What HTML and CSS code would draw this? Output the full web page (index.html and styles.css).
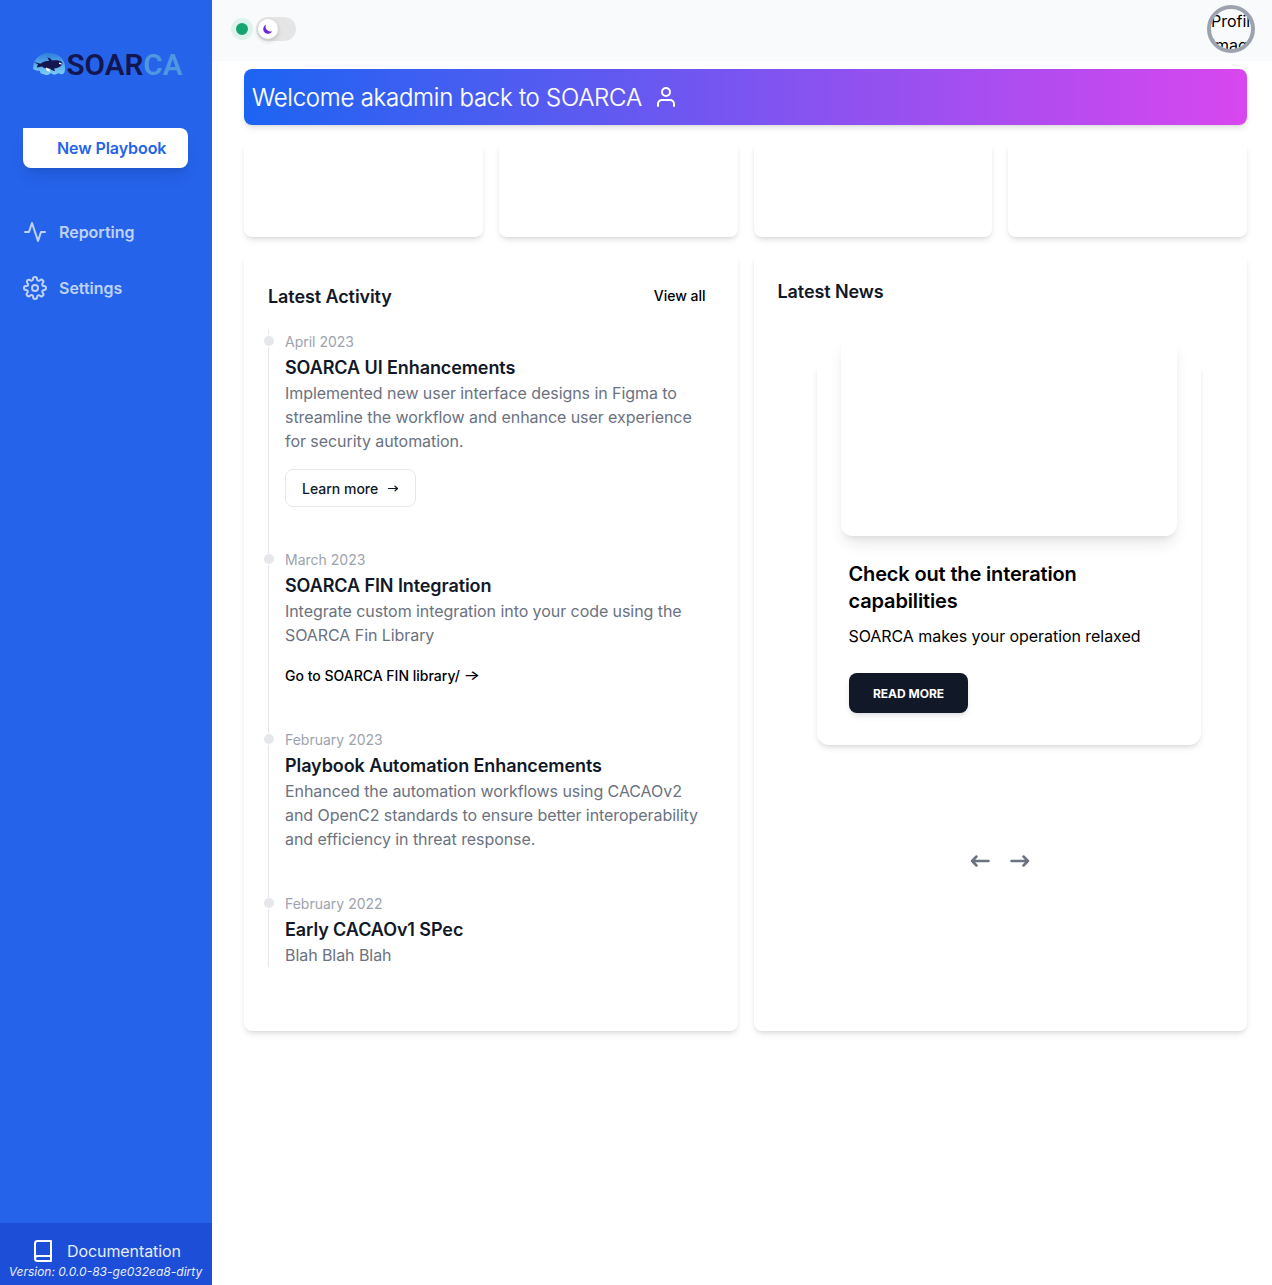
FILE: index.html
```html
<!DOCTYPE html>
<html lang="en">
<head>
<meta charset="utf-8">
<title>SOARCA</title>
<link rel="stylesheet" href="styles.css">
</head>
<body>
<div class="layout">
  <aside class="sidebar">
    <svg class="logo" width="156" height="32" viewBox="0 0 156 32" role="img" aria-label="SOARCA">
      <defs><linearGradient id="sea" x1="0" y1="0" x2="0" y2="1"><stop offset="0" stop-color="#2f7fdf"/><stop offset="1" stop-color="#7fd0f8"/></linearGradient></defs>
      <path d="M1 17C1 7 8 1 17 1s16 6 16 14c0 3 0 4-1 6-2 2-4 1-6 0-2 2-5 2-7 0-2 2-5 3-8 1-2 0-3-1-3-3-3 0-5-1-7-2z" fill="url(#sea)"/>
      <path d="M2 10c2 0 4 2 7 1.500 2-2 5-2.500 8-2.500-.5-2-1-3-2-3.500 3 0 4 1.500 5 3 5-1 10 0 10.500 3-.5 2-3 4.500-8.500 5l1 2.500c-2 0-4-1-5-2.500-3 0-6 0-8-2-2 0-3 1-5 1 0-2 1-2 1-3z" fill="#131650"/>
      <path d="M27 10.500c2 0 3 1 3 2l-3-.5zM14 15.500c2 1 4 1 4 4-3 0-4-1-4-4z" fill="#fff"/>
      <text x="34.500" y="23" textLength="116" lengthAdjust="spacingAndGlyphs" class="logo-text"><tspan class="logo-dark">SOAR</tspan><tspan class="logo-light">CA</tspan></text>
    </svg>
    <a class="new-playbook">New Playbook</a>
    <nav class="nav">
      <a class="nav-item">
        <svg width="24" height="24" viewBox="0 0 24 24" class="icon"><path d="M22 12h-4l-3 9L9 3l-3 9H2"/></svg>
        Reporting
      </a>
      <a class="nav-item">
        <svg width="24" height="24" viewBox="0 0 24 24" class="icon"><circle cx="12" cy="12" r="3"/><path d="M19.4 15a1.65 1.65 0 0 0 .33 1.82l.06.06a2 2 0 0 1-2.83 2.83l-.06-.06a1.65 1.65 0 0 0-2.8 1.17V21a2 2 0 0 1-4 0v-.09a1.65 1.65 0 0 0-2.9-1.26l-.06.06a2 2 0 0 1-2.83-2.83l.06-.06A1.65 1.65 0 0 0 3.09 14H3a2 2 0 0 1 0-4h.09A1.65 1.65 0 0 0 4.6 7.18l-.06-.06a2 2 0 0 1 2.83-2.83l.06.06A1.65 1.65 0 0 0 10 3.09V3a2 2 0 0 1 4 0v.09a1.65 1.65 0 0 0 2.82 1.26l.06-.06a2 2 0 0 1 2.83 2.83l-.06.06A1.65 1.65 0 0 0 20.91 10H21a2 2 0 0 1 0 4h-.09a1.65 1.65 0 0 0-1.51 1z"/></svg>
        Settings
      </a>
    </nav>
    <footer class="side-footer">
      <a class="docs">
        <svg width="24" height="24" viewBox="0 0 24 24" class="icon"><path d="M4 19V4.500A2.500 2.500 0 0 1 6.500 2H20v20H6.500A2.500 2.500 0 0 1 4 19.500A2.500 2.500 0 0 1 6.500 17H20"/></svg>
        Documentation
      </a>
      <p class="version">Version: 0.0.0-83-ge032ea8-dirty</p>
    </footer>
  </aside>
  <div class="page">
    <header class="topbar">
      <div class="controls">
        <span class="status"></span>
        <span class="switch"><span class="knob"><svg width="12" height="12" viewBox="0 0 20 20"><path fill="#6d28d9" d="M17.293 13.293A8 8 0 0 1 6.707 2.707a8.001 8.001 0 1 0 10.586 10.586z"/></svg></span></span>
      </div>
      <div class="avatar">Profile image</div>
    </header>
    <main class="content">
      <section class="banner">
        <h1>Welcome akadmin back to SOARCA</h1>
        <svg width="24" height="24" viewBox="0 0 24 24" class="icon"><path d="M20 21v-2a4 4 0 0 0-4-4H8a4 4 0 0 0-4 4v2"/><circle cx="12" cy="7" r="4"/></svg>
      </section>
      <section class="stats">
        <div class="card"></div><div class="card"></div><div class="card"></div><div class="card"></div>
      </section>
      <section class="panels">
        <article class="card panel">
          <div class="panel-head"><h2>Latest Activity</h2><a class="view-all">View all</a></div>
          <ol class="timeline">
            <li><time>April 2023</time><h3>SOARCA UI Enhancements</h3>
              <p>Implemented new user interface designs in Figma to streamline the workflow and enhance user experience for security automation.</p>
              <a class="learn-more">Learn more <svg width="12" height="12" viewBox="0 0 12 12"><path class="stroke" d="M1.500 5.500h9m0 0L8 3.200m2.500 2.300L8 7.800"/></svg></a></li>
            <li><time>March 2023</time><h3>SOARCA FIN Integration</h3>
              <p>Integrate custom integration into your code using the SOARCA Fin Library</p>
              <div class="link-line"><a>Go to SOARCA FIN library/ <span class="arrow">→</span></a></div></li>
            <li><time>February 2023</time><h3>Playbook Automation Enhancements</h3>
              <p class="last">Enhanced the automation workflows using CACAOv2 and OpenC2 standards to ensure better interoperability and efficiency in threat response.</p></li>
            <li><time>February 2022</time><h3>Early CACAOv1 SPec</h3><p class="last">Blah Blah Blah</p></li>
          </ol>
        </article>
        <article class="card panel">
          <h2>Latest News</h2>
          <div class="news-card">
            <div class="news-image"></div>
            <div class="news-body">
              <h5>Check out the interation capabilities</h5>
              <p>SOARCA makes your operation relaxed</p>
              <button class="read-more">READ MORE</button>
            </div>
          </div>
          <div class="pager">
            <svg width="24" height="24" viewBox="0 0 24 24" class="icon"><path d="M20.500 12H4m4.500-4.500L4 12l4.500 4.500"/></svg>
            <svg width="24" height="24" viewBox="0 0 24 24" class="icon"><path d="M3.500 12H20m-4.500-4.500L20 12l-4.500 4.500"/></svg>
          </div>
        </article>
      </section>
    </main>
  </div>
</div>
</body>
</html>
```
FILE: styles.css
```css
*{box-sizing:border-box;margin:0;padding:0}
body{font:16px/24px Inter,"Liberation Sans",sans-serif;color:#000;background:#fff}
svg{display:block;flex:none}
.icon{fill:none;stroke:currentColor;stroke-width:2;stroke-linecap:round;stroke-linejoin:round}
.layout{display:flex;height:1285px}
.sidebar{width:212px;flex:none;background:#2563eb;display:flex;flex-direction:column}
.logo{margin:52px 0 0 32px;overflow:visible}
.logo-text{font:600 29px Roboto,sans-serif}
.logo-dark{fill:#131650}
.logo-light{fill:#4f97df}
.new-playbook{margin:44px 24px 0 23px;height:40px;padding:8px 0 0 34px;background:#fff;border-radius:0 8px 8px 8px;color:#2563eb;font-weight:600;letter-spacing:-.08px;box-shadow:0 10px 15px -3px rgba(0,0,0,.1),0 4px 6px -4px rgba(0,0,0,.1)}
.nav{margin-top:52px;padding-left:23px;display:grid;gap:32px}
.nav-item{display:flex;gap:12px;font-weight:600;letter-spacing:-.03px;color:#bfd3fa}
.side-footer{margin-top:auto;height:62px;background:#1d4ed8;padding-top:16px;color:#e5edff}
.docs{display:flex;gap:12px;padding-left:31px;letter-spacing:-.08px}
.docs svg{color:#fff}
.version{font-size:12px;line-height:18px;font-style:italic;text-align:center;padding-right:1px}
.page{flex:1;min-width:0}
.topbar{height:61px;background:#f9fafb;display:flex;justify-content:space-between;padding:5px 17px 0 19px}
.controls{display:flex;gap:3px;padding-top:12px}
.status{width:22px;height:22px;margin-top:1px;border-radius:50%;border:5px solid #def3ec;background:#16a571}
.switch{width:40px;height:24px;border-radius:12px;background:#e5e5e5;padding:2px}
.knob{width:20px;height:20px;border-radius:50%;background:#fff;display:flex;align-items:center;justify-content:center;box-shadow:0 2px 5px rgba(0,0,0,.18)}
.avatar{width:48px;height:48px;border:4px solid #9ca3af;border-radius:50%;overflow:hidden}
.content{padding:8px 25px 0 32px;display:grid;gap:16px}
.banner{height:56px;border-radius:8px;padding:0 8px;display:flex;align-items:center;gap:12px;color:#fff;background:linear-gradient(90deg,#1c64f2,#d946ef);box-shadow:0 4px 6px -1px rgba(0,0,0,.1),0 2px 4px -2px rgba(0,0,0,.1)}
.banner h1{width:390px;white-space:nowrap;font-size:24px;line-height:32px;font-weight:300;letter-spacing:-.26px;padding-top:2px;-webkit-text-stroke:.2px currentColor}
.stats{display:grid;grid-template-columns:repeat(4,1fr);gap:16px}
.stats .card{height:96px}
.card{background:#fff;border-radius:8px;box-shadow:0 4px 6px -1px rgba(0,0,0,.1),0 2px 4px -2px rgba(0,0,0,.1)}
.panels{display:grid;grid-template-columns:repeat(2,1fr);gap:16px}
.panel{height:778px;padding:24px}
.panel h2,.timeline h3{font-size:18px;line-height:26px;padding-top:2px;font-weight:600;letter-spacing:-.09px;color:#111827}
.panel .panel-head h2{padding-top:1px}
.panel-head{display:flex;align-items:center;justify-content:space-between;height:38px;margin-bottom:14px}
.view-all{font-size:14px;line-height:20px;font-weight:500;padding-right:8px}
.timeline{list-style:none;border-left:1px solid #e5e7eb}
.timeline li{position:relative;margin:0 0 40px 16px}
.timeline li:last-child{margin-bottom:0}
.timeline li::before{content:"";position:absolute;left:-21px;top:7px;width:10px;height:10px;border-radius:50%;background:#e5e7eb;box-shadow:0 0 0 1px #fff}
.timeline time{font-size:14px;line-height:14px;color:#9ca3af}
.timeline p{color:#6b7280;margin-bottom:16px;letter-spacing:-.065px}
.timeline p.last{margin-bottom:0}
.learn-more{display:flex;width:131px;height:38px;align-items:center;gap:9px;padding:1px 15px 0 16px;border:1px solid #e5e7eb;border-radius:8px;font-size:14px;font-weight:500;color:#111827}
.stroke{fill:none;stroke:currentColor;stroke-width:1.2;stroke-linecap:round;stroke-linejoin:round}
.link-line{height:24px}
.link-line a{font-size:14px;font-weight:500}
.arrow{display:inline-block;font-size:17.5px;font-weight:500;line-height:14px;transform:scaleY(.75)}
.news-card{width:384px;height:385px;margin:55px 0 0 39px;border-radius:12px;box-shadow:0 4px 6px -1px rgba(0,0,0,.1),0 2px 4px -2px rgba(0,0,0,.1);display:flex;flex-direction:column}
.news-image{height:200px;margin:-24px 24px 0;border-radius:12px;background:#fff;box-shadow:0 10px 15px -3px rgba(0,0,0,.1),0 4px 6px -4px rgba(0,0,0,.1)}
.news-body{padding:25px 32px 0}
.news-body h5{font-size:20px;line-height:27px;font-weight:600;letter-spacing:-.15px;margin-bottom:9px}
.news-body p{letter-spacing:-.06px}
.read-more{display:block;margin-top:25px;width:119px;height:40px;padding:2px 0 0 1px;border:0;border-radius:8px;background:#111827;color:#fff;font:700 12px/16px Inter,sans-serif;box-shadow:0 4px 6px -1px rgba(17,24,39,.1),0 2px 4px -2px rgba(17,24,39,.1)}
.pager{display:flex;justify-content:center;gap:16px;margin-top:104px;color:#6b7280}
.pager .icon{stroke-width:2.5}
```
